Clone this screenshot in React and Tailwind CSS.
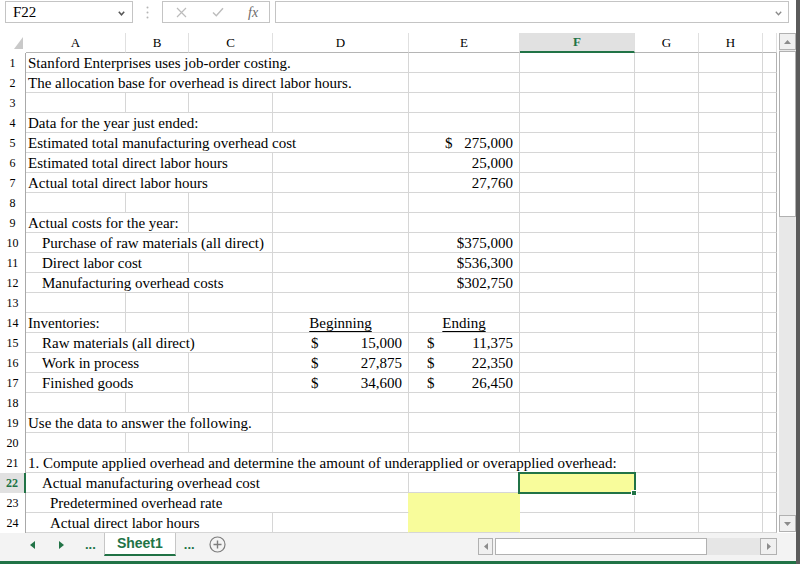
import React from "react";

const GRID = "grid grid-cols-[26px_100px_63px_84px_136px_111px_115px_64px_64px_14px]";
const SPAN = { 1: "col-span-1", 2: "col-span-2", 3: "col-span-3", 4: "col-span-4", 6: "col-span-6" };
const COLS = ["A", "B", "C", "D", "E", "F", "G", "H", ""];

const I1 = "pl-[16px]";
const I2 = "pl-[24px]";
const D_PL = "pl-[38px]";
const E_PL = "pl-[18px]";

const ROWS = [
  { n: 1, cells: [{ span: 4, t: "Stanford Enterprises uses job-order costing." }] },
  { n: 2, cells: [{ span: 4, t: "The allocation base for overhead is direct labor hours." }] },
  { n: 3 },
  { n: 4, cells: [{ span: 3, t: "Data for the year just ended:" }] },
  { n: 5, cells: [{ span: 4, t: "Estimated total manufacturing overhead cost" }, { acct: "275,000", pl: "pl-[36px]" }] },
  { n: 6, cells: [{ span: 3, t: "Estimated total direct labor hours" }, {}, { num: "25,000" }] },
  { n: 7, cells: [{ span: 3, t: "Actual total direct labor hours" }, {}, { num: "27,760" }] },
  { n: 8 },
  { n: 9, cells: [{ span: 2, t: "Actual costs for the year:" }] },
  { n: 10, cells: [{ span: 3, t: "Purchase of raw materials (all direct)", pad: I1 }, {}, { num: "$375,000" }] },
  { n: 11, cells: [{ span: 2, t: "Direct labor cost", pad: I1 }, {}, {}, { num: "$536,300" }] },
  { n: 12, cells: [{ span: 3, t: "Manufacturing overhead costs", pad: I1 }, {}, { num: "$302,750" }] },
  { n: 13 },
  { n: 14, cells: [{ t: "Inventories:" }, {}, {}, { head: "Beginning" }, { head: "Ending" }] },
  { n: 15, cells: [{ span: 3, t: "Raw materials (all direct)", pad: I1 }, { acct: "15,000", pl: D_PL }, { acct: "11,375", pl: E_PL }] },
  { n: 16, cells: [{ span: 2, t: "Work in process", pad: I1 }, {}, { acct: "27,875", pl: D_PL }, { acct: "22,350", pl: E_PL }] },
  { n: 17, cells: [{ span: 2, t: "Finished goods", pad: I1 }, {}, { acct: "34,600", pl: D_PL }, { acct: "26,450", pl: E_PL }] },
  { n: 18 },
  { n: 19, cells: [{ span: 3, t: "Use the data to answer the following." }] },
  { n: 20 },
  { n: 21, cells: [{ span: 6, t: "1. Compute applied overhead and determine the amount of underapplied or overapplied overhead:" }] },
  { n: 22, active: true, cells: [{ span: 4, t: "Actual manufacturing overhead cost", pad: I1 }, {}, { fill: true, selected: true }] },
  { n: 23, cells: [{ span: 4, t: "Predetermined overhead rate", pad: I2, rightFill: true }, { fill: true, noBottom: true, rightFill: true }] },
  { n: 24, cells: [{ span: 3, t: "Actual direct labor hours", pad: I2 }, { rightFill: true }, { fill: true, rightFill: true }] },
];

function Cell({ span = 1, t, pad = "pl-[2px]", num, acct, pl, head, fill, selected, noBottom, rightFill, last }) {
  const bb = noBottom ? "border-b-[#f8fc9b]" : "border-b-[#d6d6d6]";
  const br = rightFill ? "border-r-[#f8fc9b]" : last ? "border-r-[#b3b3b3]" : "border-r-[#d6d6d6]";
  return (
    <div
      className={`${SPAN[span]} relative h-[20px] border-b border-r ${bb} ${br} ${fill ? "bg-[#f8fc9b]" : ""} text-[15px] leading-[20px] whitespace-nowrap`}
    >
      {t && <div className={pad}>{t}</div>}
      {num && <div className="text-right pr-[6px]">{num}</div>}
      {acct && (
        <div className={`flex justify-between pr-[6px] ${pl}`}>
          <span>$</span>
          <span>{acct}</span>
        </div>
      )}
      {head && (
        <div className="text-center">
          <span className="underline underline-offset-[3px] decoration-1">{head}</span>
        </div>
      )}
      {selected && (
        <>
          <div className="absolute -left-[2px] -top-[1px] w-[118px] h-[22px] border-2 border-[#217346] z-10" />
          <div className="absolute -right-[3px] -bottom-[4px] w-[6px] h-[6px] bg-[#217346] border border-white z-10" />
        </>
      )}
    </div>
  );
}

function Row({ n, cells = [], active }) {
  const all = [...cells];
  let used = cells.reduce((a, c) => a + (c.span || 1), 0);
  for (; used < 9; used++) all.push({});
  let col = 0;
  return (
    <div className={GRID}>
      <div
        className={`h-[20px] flex items-center justify-center text-[12px] ${
          active
            ? "bg-[#e1e1e1] text-[#217346] font-bold border-r-2 border-r-[#217346]"
            : "border-r border-r-[#a9a9a9]"
        }`}
      >
        {n}
      </div>
      {all.map((c, i) => {
        col += c.span || 1;
        return <Cell key={i} {...c} last={col === 9} />;
      })}
    </div>
  );
}

function HeaderRow() {
  return (
    <div className={GRID}>
      <div className="h-[20px] flex justify-end items-end pr-[3px] pb-[4px]">
        <svg width="9" height="12" viewBox="0 0 9 12">
          <polygon points="9,0 9,12 0,12" fill="#c9c9c9" />
        </svg>
      </div>
      {COLS.map((c, i) => (
        <div
          key={i}
          className={`h-[20px] flex items-center justify-center text-[13px] border-r border-r-[#e0e0e0] ${
            c === "F"
              ? "bg-[#e1e1e1] text-[#217346] font-bold border-b-2 border-b-[#217346]"
              : "border-b border-b-[#b5b5b5]"
          }`}
        >
          {c}
        </div>
      ))}
    </div>
  );
}

function ScrollButton({ dir }) {
  const pts = {
    up: "0,4 7,4 3.5,0",
    down: "0,0 7,0 3.5,4",
    left: "4,0 4,7 0,3.5",
    right: "0,0 0,7 4,3.5",
  }[dir];
  const vertical = dir === "up" || dir === "down";
  return (
    <div className="w-[17px] h-[17px] shrink-0 border border-[#b1b1b1] bg-[#f0f0f0] flex items-center justify-center">
      <svg width={vertical ? 7 : 4} height={vertical ? 4 : 7}>
        <polygon points={pts} fill="#8c8c8c" />
      </svg>
    </div>
  );
}

function VScroll() {
  return (
    <div className="w-[19px] pl-[2px] flex flex-col h-[500px]">
      <ScrollButton dir="up" />
      <div className="flex-1 bg-[#e8e8e8] pt-[1px]">
        <div className="h-[166px] bg-white border border-[#b1b1b1]" />
      </div>
      <ScrollButton dir="down" />
      <div className="h-[1px]" />
    </div>
  );
}

function FormulaBar() {
  return (
    <div className="h-[23px] pt-[1px] flex">
      <div className="ml-[5px] w-[128px] h-[22px] border border-[#c4c4c4] flex items-center pl-[7px] pr-[7px] text-[15px] font-['Liberation_Serif',serif]">
        <span>F22</span>
        <svg className="ml-auto mt-[3px]" width="7" height="5" viewBox="0 0 7 5">
          <path d="M0.8 0.8 L3.5 3.8 L6.2 0.8" stroke="#555" strokeWidth="1.5" fill="none" />
        </svg>
      </div>
      <div className="w-[29px] flex justify-center items-center">
        <svg width="3" height="13" viewBox="0 0 3 13">
          <circle cx="1.5" cy="1.5" r="1" fill="#b5b5b5" />
          <circle cx="1.5" cy="6.5" r="1" fill="#b5b5b5" />
          <circle cx="1.5" cy="11.5" r="1" fill="#b5b5b5" />
        </svg>
      </div>
      <div className="w-[108px] h-[22px] border border-[#c4c4c4] flex items-center pl-[13px]">
        <svg width="11" height="11" viewBox="0 0 11 11">
          <path d="M1 1 L10 10 M10 1 L1 10" stroke="#bcbcbc" strokeWidth="1.2" />
        </svg>
        <svg className="ml-[25px]" width="12" height="10" viewBox="0 0 12 10">
          <path d="M1 5.5 L4.3 8.8 L11 1.2" stroke="#bcbcbc" strokeWidth="1.4" fill="none" />
        </svg>
        <span className="ml-[24px] italic text-[14px] text-[#6b6b6b]">fx</span>
      </div>
      <div className="ml-[5px] w-[514px] h-[22px] border border-[#c4c4c4] flex items-center justify-end pr-[6px]">
        <svg className="mt-[3px]" width="7" height="5" viewBox="0 0 7 5">
          <path d="M0.8 0.8 L3.5 3.8 L6.2 0.8" stroke="#8a8a8a" strokeWidth="1.3" fill="none" />
        </svg>
      </div>
    </div>
  );
}

function TabBar() {
  return (
    <div className="h-[28px] bg-[#f3f3f3] flex items-start font-['Liberation_Sans',Arial,sans-serif]">
      <div className="h-[23px] flex items-center pl-[30px]">
        <svg width="5" height="8">
          <polygon points="5,0 5,8 0,4" fill="#217346" />
        </svg>
        <svg className="ml-[24px]" width="5" height="8">
          <polygon points="0,0 0,8 5,4" fill="#217346" />
        </svg>
        <span className="ml-[21px] text-[13px] font-bold text-[#217346] leading-none">...</span>
      </div>
      <div className="ml-[8px] w-[72px] h-[23px] bg-white border-l border-r border-[#c6c6c6] border-b-2 border-b-[#217346] flex items-center justify-center text-[14px] font-bold text-[#217346]">
        Sheet1
      </div>
      <div className="h-[23px] flex items-center">
        <span className="ml-[8px] text-[13px] font-bold text-[#217346] leading-none">...</span>
        <svg className="ml-[14px]" width="17" height="17" viewBox="0 0 17 17">
          <circle cx="8.5" cy="8.5" r="7.5" stroke="#7d7d7d" strokeWidth="1.2" fill="none" />
          <path d="M8.5 4.5 V12.5 M4.5 8.5 H12.5" stroke="#7d7d7d" strokeWidth="1.4" />
        </svg>
      </div>
      <div className="ml-auto mr-[19px] mt-[5px] w-[299px] h-[17px] flex">
        <div className="w-[15px] h-[17px] border border-[#b1b1b1] bg-[#f0f0f0] flex items-center justify-center">
          <svg width="4" height="7">
            <polygon points="4,0 4,7 0,3.5" fill="#8c8c8c" />
          </svg>
        </div>
        <div className="ml-[2px] w-[212px] h-[17px] bg-white border border-[#b1b1b1]" />
        <div className="flex-1 bg-[#e6e6e6]" />
        <ScrollButton dir="right" />
      </div>
    </div>
  );
}

export default function App() {
  return (
    <div className="w-[800px] h-[564px] flex bg-white overflow-hidden font-['Liberation_Serif','Times_New_Roman',serif] text-black">
      <div className="w-[796px] flex flex-col">
        <FormulaBar />
        <div className="h-[10px]" />
        <div className="flex">
          <div className="w-[777px]">
            <HeaderRow />
            {ROWS.map((r) => (
              <Row key={r.n} {...r} />
            ))}
          </div>
          <VScroll />
        </div>
        <TabBar />
        <div className="h-[3px] bg-[#217346]" />
      </div>
      <div className="w-[4px] bg-[#5b5b5b]" />
    </div>
  );
}
